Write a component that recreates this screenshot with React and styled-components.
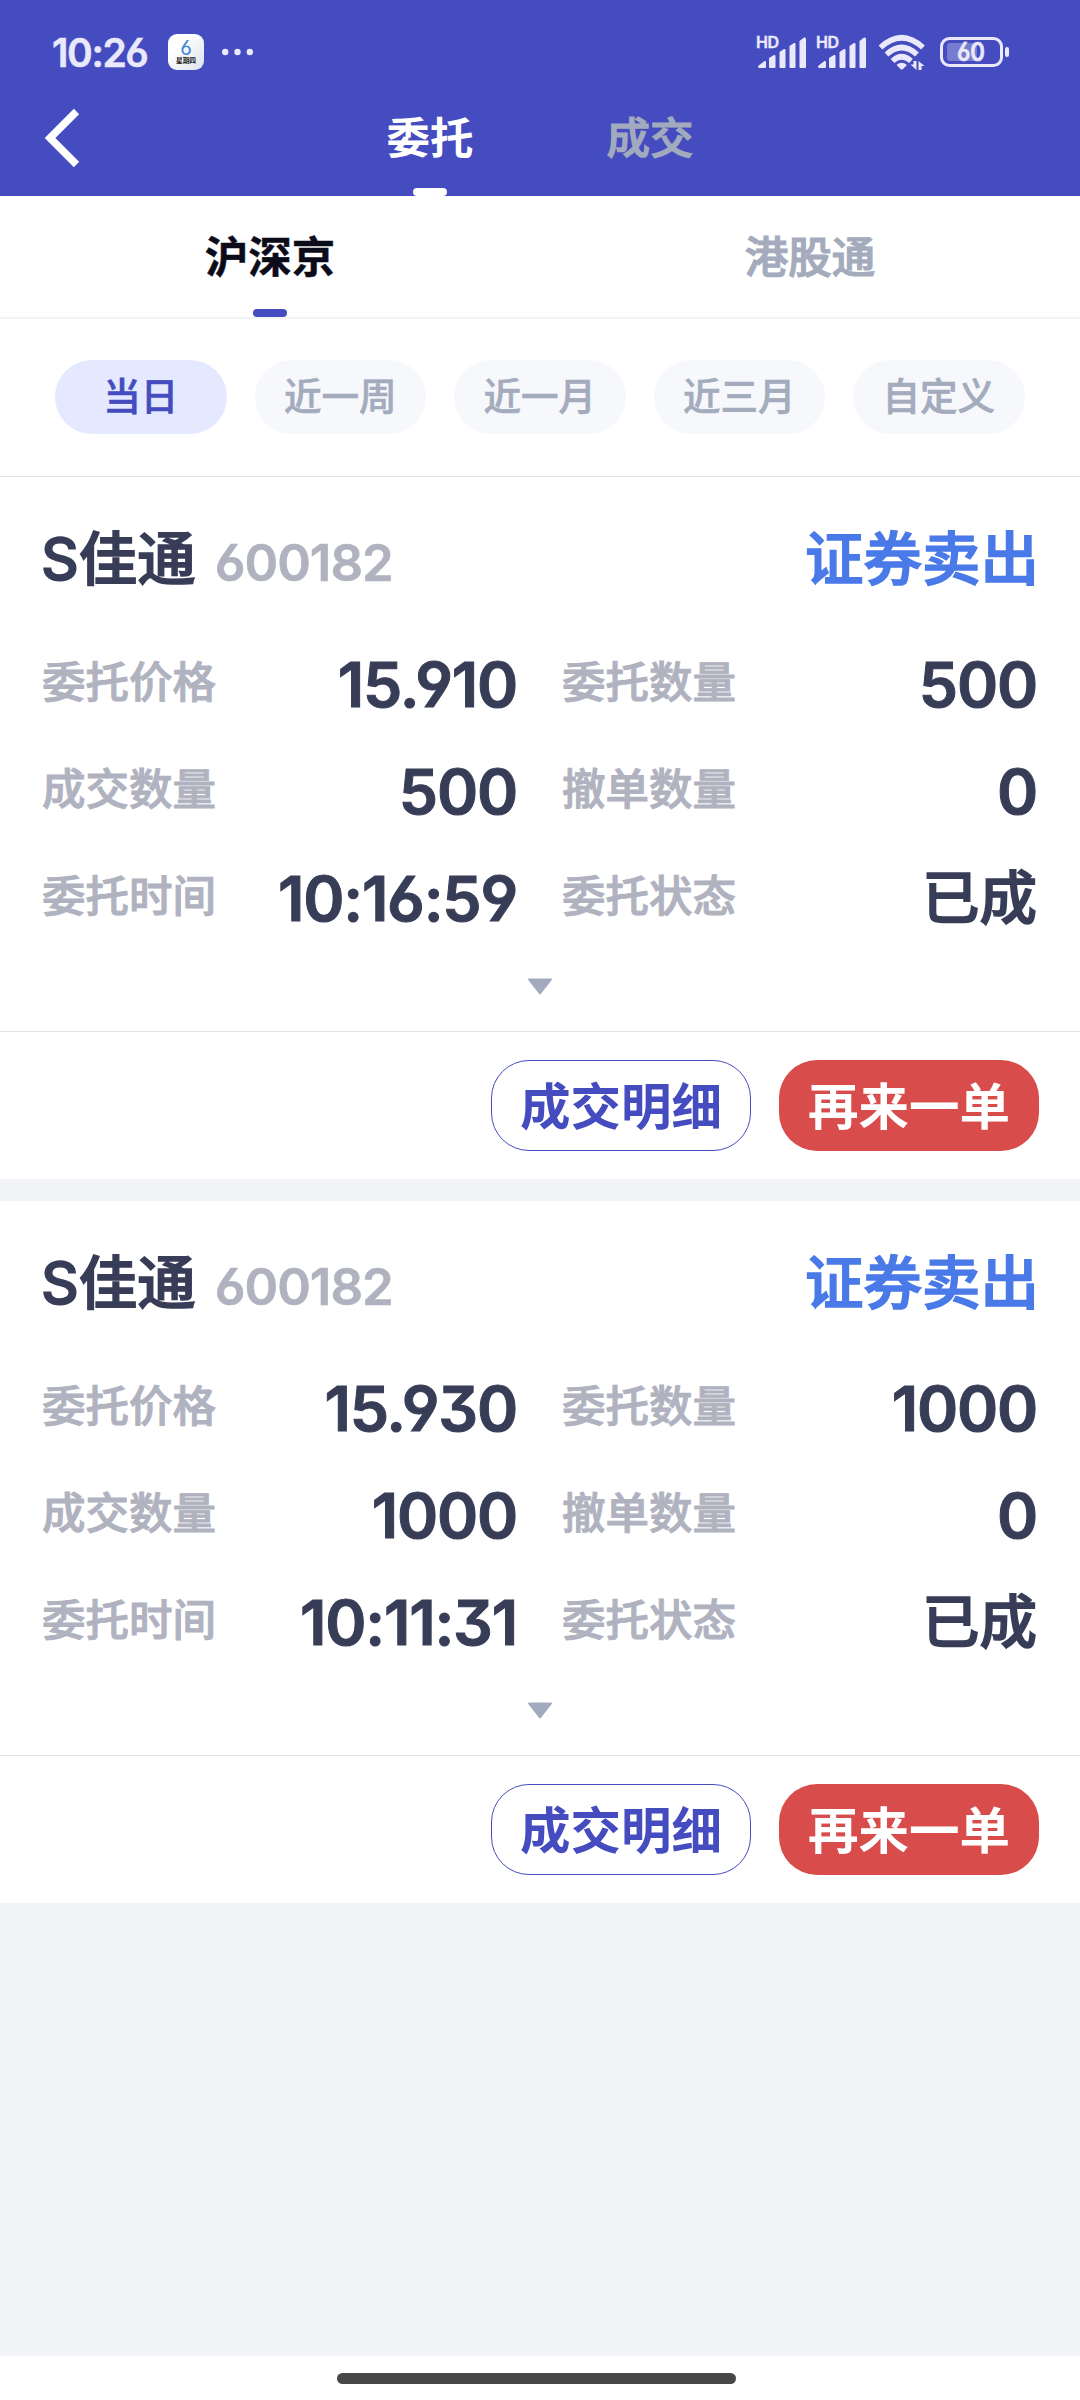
import React from 'react';
import styled, { createGlobalStyle } from 'styled-components';

const GlobalStyle = createGlobalStyle`
  * {
    box-sizing: border-box;
  }

  body {
    margin: 0;
    background: #f3f4f7;
    font-family: Inter, "Noto Sans CJK SC", sans-serif;
    font-feature-settings: "ss01" 1;
  }
`;

const Screen = styled.div`
  display: flex;
  flex-direction: column;
  width: 1080px;
  height: 2400px;
  overflow: hidden;
`;

const Header = styled.header`
  height: 196px;
  background: #454cbf;
`;

const StatusBar = styled.div`
  display: flex;
  justify-content: space-between;
  height: 80px;
  padding: 30px 69px 0 52px;
`;

const StatusLeft = styled.div`
  display: flex;
  align-items: center;
  height: 44px;
`;

const Clock = styled.span`
  width: 116px;
  padding-top: 1px;
  color: #e9e9fb;
  font-size: 39px;
  font-weight: 600;
  line-height: 44px;
  letter-spacing: -1.4px;
  -webkit-text-stroke: 0.5px;
`;

const CalendarIcon = styled.div`
  display: flex;
  flex-direction: column;
  align-items: center;
  width: 36px;
  height: 36px;
  margin-right: 18px;
  padding-top: 5px;
  border-radius: 9px;
  background: linear-gradient(135deg, #fff 30%, #dbe3ea);
`;

const CalendarDay = styled.span`
  color: #3a86d8;
  font-size: 20px;
  line-height: 18px;
`;

const CalendarWeek = styled.span`
  color: #222;
  font-size: 6.7px;
  font-weight: 700;
  line-height: 8px;
`;

const NavBar = styled.nav`
  display: flex;
  height: 116px;
`;

const BackButton = styled.div`
  width: 320px;
  padding: 27px 0 0 44px;
`;

const NavTab = styled.div`
  position: relative;
  width: 220px;
  padding-top: 26px;
  color: ${props => props.$active ? '#fff' : '#a2aabe'};
  font-size: 43.5px;
  font-weight: ${props => props.$active ? 700 : 500};
  line-height: 64px;
  text-align: center;
  -webkit-text-stroke: ${props => props.$active ? 0 : '1.2px'};
`;

const Indicator = styled.span`
  position: absolute;
  bottom: 0;
  left: 50%;
  width: 34px;
  height: 8px;
  margin-left: -17px;
  border-radius: 4px;
  background: ${props => props.$light ? '#fff' : '#454cbf'};
`;

const MarketTabs = styled.div`
  display: flex;
  height: 123px;
  border-bottom: 2px solid #f3f4f6;
  background: #fff;
`;

const MarketTab = styled.div`
  position: relative;
  flex: 1;
  padding-top: 29px;
  color: ${props => props.$active ? '#0b0b1a' : '#a3abbd'};
  font-size: 43.5px;
  font-weight: ${props => props.$active ? 700 : 500};
  line-height: 64px;
  text-align: center;
  -webkit-text-stroke: ${props => props.$active ? '0.5px' : '1.2px'};
`;

const Filters = styled.div`
  display: flex;
  gap: 28px;
  height: 158px;
  padding: 41px 0 0 55px;
  border-bottom: 1px solid #e1e4e5;
  background: #fff;
`;

const Chip = styled.div`
  width: 171.5px;
  height: 74px;
  border-radius: 37px;
  background: ${props => props.$active ? '#e4e9ff' : '#f6f8fc'};
  color: ${props => props.$active ? '#454cbf' : '#a3abbd'};
  font-size: 37.5px;
  font-weight: 500;
  line-height: 74px;
  text-align: center;
  -webkit-text-stroke: 0.6px;
`;

const OrderCard = styled.section`
  height: 702px;
  margin-bottom: 22px;
  background: #fff;
`;

const OrderBody = styled.div`
  height: 555px;
  padding: 38px 41px 0;
  border-bottom: 1px solid #e1e4e5;
`;

const OrderTitle = styled.div`
  display: flex;
  height: 88px;
  line-height: 88px;
`;

const StockName = styled.span`
  color: #383d57;
  font-size: 58.5px;
  font-weight: 500;
  -webkit-text-stroke: 1.5px;
`;

const StockCode = styled.span`
  margin-left: 19px;
  padding-top: 4px;
  color: #b0b3bf;
  font-size: 51px;
  font-weight: 600;
  letter-spacing: -1px;
  -webkit-text-stroke: 0.6px;
`;

const OrderSide = styled.span`
  margin-left: auto;
  color: #4a79e8;
  font-size: 58.5px;
  font-weight: 500;
  -webkit-text-stroke: 1.5px;
`;

const Fields = styled.div`
  display: grid;
  grid-template-columns: 477px 477px;
  grid-auto-rows: 107px;
  column-gap: 43px;
  padding-top: 27px;
`;

const Field = styled.div`
  display: flex;
  justify-content: space-between;
`;

const Label = styled.span`
  margin-left: 1px;
  color: #b0b3bf;
  font-size: 43.5px;
  font-weight: 500;
  line-height: 105px;
  -webkit-text-stroke: 1px;
`;

const Value = styled.span`
  margin-right: 1px;
  color: #383d57;
  font-size: ${props => props.$text ? 57.5 : 62.5}px;
  font-weight: ${props => props.$text ? 500 : 600};
  line-height: 109px;
  letter-spacing: ${props => props.$text ? 0 : '-1.2px'};
  -webkit-text-stroke: ${props => props.$text ? '1.5px' : '1px'};
`;

const Expand = styled.div`
  display: flex;
  justify-content: center;
  padding-top: 27px;
`;

const Actions = styled.div`
  display: flex;
  justify-content: flex-end;
  gap: 28px;
  padding: 28px 41px 0;
`;

const Button = styled.button`
  width: 260px;
  height: 91px;
  padding: 0 0 6px;
  border: ${props => props.$primary ? 'none' : '1px solid #454cbf'};
  border-radius: 38px;
  background: ${props => props.$primary ? '#d84c4b' : '#fff'};
  color: ${props => props.$primary ? '#fff' : '#454cbf'};
  font-family: inherit;
  font-size: 50.5px;
  font-weight: 700;
`;

const HomeBar = styled.div`
  display: flex;
  justify-content: center;
  height: 44px;
  margin-top: auto;
  padding: 17px 7px 0 0;
  background: #fff;
`;

const HomePill = styled.div`
  width: 399px;
  height: 11px;
  border-radius: 6px;
  background: #474747;
`;

const SvgText = styled.text`
  fill: #e9e9fb;
  font-weight: 600;
`;

const Signal = ({ x }) => (
  <g transform={`translate(${x} 0)`}>
    <SvgText x="0" y="18" fontSize="16" textLength="23" stroke="#e9e9fb" strokeWidth="0.4">HD</SvgText>
    <path
      fill="#e9e9fb"
      d="M2 36 L8.500 31 Q10 30.500 10 32 V37 Q10 38 9 38 H3 Q2 38 2 36Z
        M13 28 L18 25 Q19.500 24.500 19.500 26 V37 Q19.500 38 18.500 38 H14 Q13 38 13 37Z
        M23.500 22 L28 19 Q29.500 18.500 29.500 20 V37 Q29.500 38 28.500 38 H24.500 Q23.500 38 23.500 37Z
        M33.500 16 L38 13 Q39.500 12.500 39.500 14 V37 Q39.500 38 38.500 38 H34.500 Q33.500 38 33.500 37Z
        M43.500 11 L48 7.500 Q50 7 50 9 V37 Q50 38 49 38 H44.500 Q43.500 38 43.500 37Z"
    />
  </g>
);

const StatusIcons = () => (
  <svg width="255" height="44" viewBox="0 0 255 44">
    <Signal x={0} />
    <Signal x={60} />
    <g fill="none" stroke="#e9e9fb" strokeWidth="5.5">
      <path d="M124.500 17.500 Q145.500 -2 167 17.500" />
      <path d="M130.500 24.500 Q145.500 10.500 161 24.500" />
      <path d="M136.500 31 Q145.500 22.500 155 31" />
    </g>
    <path fill="#e9e9fb" d="M140.500 35 Q145.500 30.500 151 35 L147 39 Q145.700 40 144.500 39Z" />
    <path
      fill="#e9e9fb"
      d="M157.500 31 H160.500 V40 L154.500 34.500 H157.500Z M162.500 31 L168.500 36 H165.500 V40 H162.500Z"
    />
    <rect x="185.500" y="8.500" width="60" height="27" rx="8" fill="none" stroke="#e9e9fb" strokeWidth="3" />
    <rect x="191" y="13" width="30" height="18" rx="3" fill="#777cd1" />
    <SvgText
      x="201"
      y="31"
      fontSize="25"
      textLength="28"
      lengthAdjust="spacingAndGlyphs"
      stroke="#e9e9fb"
      strokeWidth="0.6"
    >
      60
    </SvgText>
    <rect x="249" y="17" width="4" height="10" rx="2" fill="#e9e9fb" />
  </svg>
);

const orders = [
  {
    name: 'S佳通',
    code: '600182',
    side: '证券卖出',
    fields: [
      ['委托价格', '15.910'],
      ['委托数量', '500'],
      ['成交数量', '500'],
      ['撤单数量', '0'],
      ['委托时间', '10:16:59'],
      ['委托状态', '已成', true],
    ],
  },
  {
    name: 'S佳通',
    code: '600182',
    side: '证券卖出',
    fields: [
      ['委托价格', '15.930'],
      ['委托数量', '1000'],
      ['成交数量', '1000'],
      ['撤单数量', '0'],
      ['委托时间', '10:11:31'],
      ['委托状态', '已成', true],
    ],
  },
];

const periods = ['当日', '近一周', '近一月', '近三月', '自定义'];

const Order = ({ order }) => (
  <OrderCard>
    <OrderBody>
      <OrderTitle>
        <StockName>{order.name}</StockName>
        <StockCode>{order.code}</StockCode>
        <OrderSide>{order.side}</OrderSide>
      </OrderTitle>
      <Fields>
        {order.fields.map(([label, value, isText]) => (
          <Field key={label}>
            <Label>{label}</Label>
            <Value $text={isText}>{value}</Value>
          </Field>
        ))}
      </Fields>
      <Expand>
        <svg width="26" height="18" viewBox="0 0 26 18">
          <path
            d="M2 1.500 H24 L13 15.500Z"
            fill="#a1abbd"
            stroke="#a1abbd"
            strokeWidth="2"
            strokeLinejoin="round"
          />
        </svg>
      </Expand>
    </OrderBody>
    <Actions>
      <Button>成交明细</Button>
      <Button $primary>再来一单</Button>
    </Actions>
  </OrderCard>
);

export default () => (
  <Screen>
    <GlobalStyle />
    <Header>
      <StatusBar>
        <StatusLeft>
          <Clock>10:26</Clock>
          <CalendarIcon>
            <CalendarDay>6</CalendarDay>
            <CalendarWeek>星期四</CalendarWeek>
          </CalendarIcon>
          <svg width="32" height="8" viewBox="0 0 32 8" fill="#e9e9fb">
            <circle cx="3.200" cy="4" r="3.200" />
            <circle cx="15.500" cy="4" r="3.200" />
            <circle cx="27.800" cy="4" r="3.200" />
          </svg>
        </StatusLeft>
        <StatusIcons />
      </StatusBar>
      <NavBar>
        <BackButton>
          <svg width="38" height="62" viewBox="0 0 38 62">
            <path d="M32.500 4.500 L6 31 L32.500 57.500" fill="none" stroke="#fff" strokeWidth="7.500" />
          </svg>
        </BackButton>
        <NavTab $active>
          委托
          <Indicator $light />
        </NavTab>
        <NavTab>成交</NavTab>
      </NavBar>
    </Header>

    <MarketTabs>
      <MarketTab $active>
        沪深京
        <Indicator />
      </MarketTab>
      <MarketTab>港股通</MarketTab>
    </MarketTabs>

    <Filters>
      {periods.map((period, i) => (
        <Chip key={period} $active={i === 0}>{period}</Chip>
      ))}
    </Filters>

    {orders.map((order, i) => (
      <Order key={i} order={order} />
    ))}

    <HomeBar>
      <HomePill />
    </HomeBar>
  </Screen>
);
